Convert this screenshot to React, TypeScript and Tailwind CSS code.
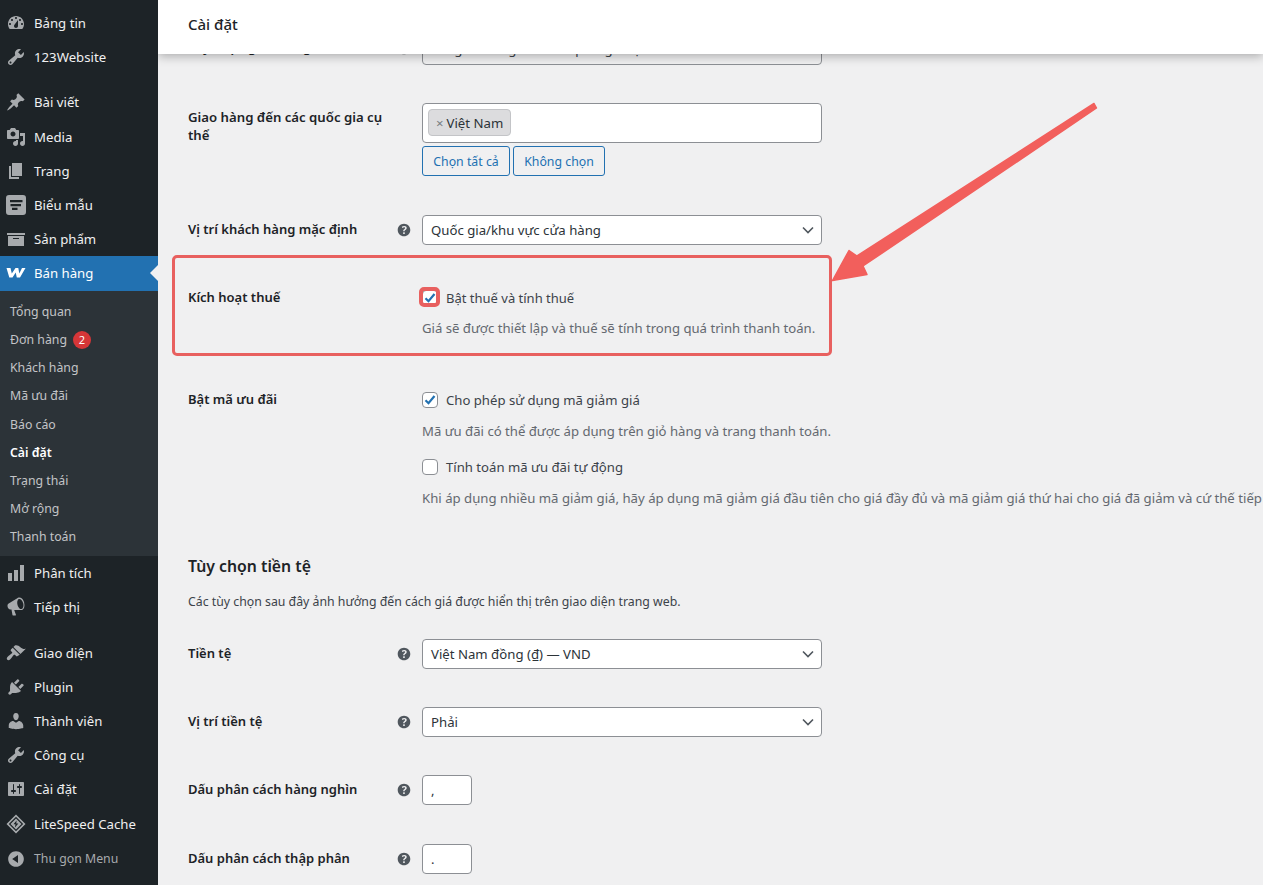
import type { ReactNode } from 'react'

const font = "font-['Noto_Sans','Liberation_Sans',sans-serif]"

// dashicons, 20x20 viewBox
const paths: Record<string, string> = {
  dashboard:
    'M3.76 16h12.48c1.1-1.37 1.76-3.11 1.76-5 0-4.42-3.58-8-8-8s-8 3.58-8 8c0 1.89.66 3.63 1.76 5zM10 4c.55 0 1 .45 1 1s-.45 1-1 1-1-.45-1-1 .45-1 1-1zM6 6c.55 0 1 .45 1 1s-.45 1-1 1-1-.45-1-1 .45-1 1-1zm8 0c.55 0 1 .45 1 1s-.45 1-1 1-1-.45-1-1 .45-1 1-1zm-5.37 5.55L12 7v6c0 1.1-.9 2-2 2s-2-.9-2-2c0-.57.24-1.08.63-1.45zM4 10c.55 0 1 .45 1 1s-.45 1-1 1-1-.45-1-1 .45-1 1-1zm12 0c.55 0 1 .45 1 1s-.45 1-1 1-1-.45-1-1 .45-1 1-1z',
  tools:
    'M16.68 9.77c-1.34 1.34-3.3 1.67-4.95.99l-5.41 6.52c-.99.99-2.59.99-3.58 0s-.99-2.59 0-3.57l6.52-5.42c-.68-1.65-.35-3.61.99-4.95 1.28-1.28 3.12-1.62 4.72-1.06l-2.89 2.89 2.82 2.82 2.86-2.87c.53 1.58.18 3.39-1.08 4.65zM3.81 16.21c.4.39 1.04.39 1.43 0 .4-.4.4-1.04 0-1.43-.39-.4-1.03-.4-1.43 0-.39.39-.39 1.03 0 1.43z',
  post: 'M10.44 3.02l1.82-1.82 6.36 6.35-1.83 1.82c-1.05-.68-2.48-.57-3.41.36l-.75.75c-.92.93-1.04 2.35-.35 3.41l-1.83 1.82-2.41-2.41-2.8 2.79c-.42.42-3.38 2.71-3.8 2.29s1.86-3.39 2.28-3.81l2.79-2.79L4.1 9.36l1.83-1.82c1.05.69 2.48.57 3.4-.36l.75-.75c.93-.92 1.05-2.35.36-3.41z',
  media:
    'M13 11V4c0-.55-.45-1-1-1h-1.67L9 1H5L3.67 3H2c-.55 0-1 .45-1 1v7c0 .55.45 1 1 1h10c.55 0 1-.45 1-1zM7 4.5c1.38 0 2.5 1.12 2.5 2.5S8.38 9.5 7 9.5 4.5 8.38 4.5 7 5.62 4.5 7 4.5zM14 6h5v10.5c0 1.38-1.12 2.5-2.5 2.5S14 17.88 14 16.5s1.12-2.5 2.5-2.5c.17 0 .34.02.5.05V9h-3V6zm-4 8.05V13h2v3.5c0 1.38-1.12 2.5-2.5 2.5S7 17.88 7 16.5 8.12 14 9.5 14c.17 0 .34.02.5.05z',
  page: 'M6 15V2h10v13H6zm-1 1h8v2H3V5h2v11z',
  form: 'M3 0h14a3 3 0 0 1 3 3v14a3 3 0 0 1-3 3H3a3 3 0 0 1-3-3V3a3 3 0 0 1 3-3zM4 5v2.300h12.500V5H4zM4.500 9v2.200h10.500V9H4.500zM6 12.800V15h5.500v-2.200H6z',
  archive: 'M19 4v2H1V4h18zM2 7h16v10H2V7zm11 3V9H7v1h6z',
  woo: 'M.5 5h4l1.300 5.500L9.500 5h2.800l1 5.500L16 5h3.500l-5.500 9.500h-3.200l-1.100-5-3.200 5H3.300z',
  chart: 'M18 18V2h-4v16h4zm-6 0V7H8v11h4zm-6 0v-8H2v8h4z',
  megaphone:
    'M18.150 5.940c.46 1.620.38 3.220-.02 4.480-.42 1.280-1.260 2.180-2.300 2.480-.16.06-.26.06-.4.06-.06.02-.12.02-.18.02-.06.02-.14.02-.22.02H8.200l1.800 4.900c.02.14-.06.26-.14.34-.08.1-.24.16-.34.16H6.950c-.1 0-.26-.06-.34-.16-.08-.08-.16-.2-.14-.34l-1-5.500H4.250c-.5.06-1.080-.18-1.540-.62s-.88-1.080-1.060-1.880c-.24-.8-.2-1.560-.02-2.200.18-.62.58-1.080 1.060-1.300l9.020-5.420c.1-.06.18-.1.24-.16.06-.04.14-.08.24-.12.16-.08.28-.12.5-.18 1.040-.3 2.240.1 3.220 1 .98.880 1.800 2.240 2.260 3.860zm-2.580 5.980c.4-.1.740-.34 1.040-.7.58-.7.860-1.760.860-3.040-.02-.64-.1-1.300-.28-1.980-.34-1.360-1.020-2.500-1.780-3.240s-1.680-1.100-2.460-.88c-.38.12-.72.38-.98.76-.58.74-.84 1.900-.76 3.160.06.7.18 1.340.36 1.960.34 1.320 1 2.480 1.740 3.200.72.740 1.520 1.100 2.260.76z',
  brush:
    'M14.480 11.060L7.410 3.990l1.500-1.500c.5-.56 2.300-.47 3.510.32 1.210.8 1.430 1.280 2.910 2.100 1.180.64 2.450 1.260 4.450.85zm-.71.71L6.700 4.700 4.930 6.470c-.39.39-.39 1.020 0 1.410l1.060 1.060c.39.39.39 1.030 0 1.420-.6.6-1.430 1.110-2.210 1.700-.59.44-1.440 1.060-2.050 1.670-1.030 1.030-1.220 2.250-.45 3.020.78.770 2 .58 3.030-.45.61-.61 1.230-1.460 1.670-2.050.59-.78 1.100-1.610 1.700-2.210.39-.39 1.030-.39 1.420 0l1.060 1.060c.39.39 1.020.39 1.410 0z',
  plugin:
    'M13.110 4.360L9.870 7.600 8 5.730l3.240-3.240c.35-.34 1.050-.2 1.560.32.52.51.66 1.210.31 1.550zm-8 1.770l.91-1.120 9.010 9.010-1.190.84c-.71.71-2.630 1.160-3.820 1.160H6.140L4.900 17.260c-.59.59-1.540.59-2.120 0-.59-.58-.59-1.530 0-2.120l1.240-1.240v-3.880c0-1.130.4-3.190 1.090-3.890zm7.260 3.970l3.240-3.240c.34-.35 1.040-.21 1.550.31.52.51.66 1.210.31 1.550l-3.240 3.250z',
  users:
    'M10 9.250c-2.270 0-2.730-3.440-2.730-3.440C7 4.020 7.820 2 9.970 2c2.160 0 2.980 2.020 2.710 3.810 0 0-.41 3.440-2.68 3.440zm0 2.570L12.720 10c2.390 0 4.520 2.330 4.520 4.530v2.490s-3.650 1.130-7.240 1.130c-3.650 0-7.240-1.130-7.240-1.130v-2.490c0-2.250 1.940-4.480 4.470-4.480z',
  settings:
    'M18 16V4c0-.55-.45-1-1-1H3c-.55 0-1 .45-1 1v12c0 .55.45 1 1 1h14c.55 0 1-.45 1-1zM8 11h1c.55 0 1 .45 1 1s-.45 1-1 1H8v1.500c0 .28-.22.5-.5.5s-.5-.22-.5-.5V13H6c-.55 0-1-.45-1-1s.45-1 1-1h1V5.500c0-.28.22-.5.5-.5s.5.22.5.5V11zm5-2h-1c-.55 0-1-.45-1-1s.45-1 1-1h1V5.500c0-.28.22-.5.5-.5s.5.22.5.5V7h1c.55 0 1 .45 1 1s-.45 1-1 1h-1v5.500c0 .28-.22.5-.5.5s-.5-.22-.5-.5V9z',
  collapse: 'M10 2.160c4.330 0 7.840 3.510 7.840 7.840s-3.510 7.840-7.840 7.840S2.160 14.330 2.160 10 5.710 2.160 10 2.160zm2 11.720V6.120L6.180 9.970z',
  litespeed:
    'M10 .5L19.500 10 10 19.500.5 10 10 .5zm0 2.300L2.800 10l7.200 7.200 7.200-7.200L10 2.800zm0 1.700l5.500 5.500-5.500 5.500L4.500 10 10 4.500zm.6 1.900L7.500 10.300h2l-.6 3.300 3.500-4h-2.100l.3-3.200z',
}

const help =
  'M17 10c0-3.870-3.140-7-7-7-3.870 0-7 3.130-7 7 0 3.860 3.130 7 7 7 3.860 0 7-3.140 7-7zm-6.300 1.480H9.140v-.43c0-.38.08-.7.24-.98s.46-.57.88-.89c.41-.29.68-.53.81-.71.14-.18.2-.39.2-.62 0-.25-.09-.44-.28-.58-.19-.13-.45-.19-.79-.19-.58 0-1.250.19-2 .57l-.64-1.280c.87-.49 1.800-.74 2.770-.74.81 0 1.450.2 1.920.58.48.39.71.91.71 1.550 0 .43-.09.8-.29 1.110-.19.32-.57.67-1.110 1.060-.38.28-.61.49-.71.63-.1.15-.15.34-.15.57v.35zm-1.470 2.740c-.18-.18-.27-.42-.27-.73 0-.33.08-.58.26-.75s.43-.25.77-.25c.32 0 .57.09.75.26s.27.42.27.74c0 .3-.09.55-.27.72-.18.18-.43.27-.75.27-.33 0-.58-.09-.76-.26z'

function Icon({ name, active }: { name: string; active?: boolean }) {
  return (
    <svg viewBox="0 0 20 20" className={`h-5 w-5 ${active ? 'fill-white' : 'fill-[#a7aaad]'}`}>
      <path d={paths[name]} fillRule="evenodd" />
    </svg>
  )
}

function MenuItem({ icon, label, dim }: { icon: string; label: string; dim?: boolean }) {
  return (
    <div className="flex h-[34px] items-center">
      <div className="mr-[2px] flex w-[32px] justify-center">
        <Icon name={icon} />
      </div>
      <span className={dim ? 'text-[#a7aaad]' : 'text-[#f0f0f1]'}>{label}</span>
    </div>
  )
}

const shopLinks = ['Tổng quan', 'Đơn hàng', 'Khách hàng', 'Mã ưu đãi', 'Báo cáo', 'Cài đặt', 'Trạng thái', 'Mở rộng', 'Thanh toán']

function Sidebar() {
  return (
    <aside className="h-full w-[158px] shrink-0 overflow-hidden bg-[#1d2327] pt-[6px] text-[13.2px] leading-[18px]">
      <MenuItem icon="dashboard" label="Bảng tin" />
      <MenuItem icon="tools" label="123Website" />
      <div className="h-[11px]" />
      <MenuItem icon="post" label="Bài viết" />
      <div className="h-px" />
      <MenuItem icon="media" label="Media" />
      <MenuItem icon="page" label="Trang" />
      <MenuItem icon="form" label="Biểu mẫu" />
      <MenuItem icon="archive" label="Sản phẩm" />
      <div className="relative flex h-[35px] items-center bg-[#2271b1] pb-px">
        <div className="mr-[2px] flex w-[32px] justify-center">
          <Icon name="woo" active />
        </div>
        <span className="text-white">Bán hàng</span>
        <div className="absolute right-0 top-[9px] h-0 w-0 border-y-[8px] border-r-[8px] border-y-transparent border-r-[#f0f0f1]" />
      </div>
      <div className="bg-[#2c3338] pb-[5px] pt-[7px] text-[12.3px]">
        {shopLinks.map((l) => (
          <div key={l} className={`flex h-[28.15px] items-center gap-[6px] pl-[10px] ${l === 'Cài đặt' ? 'font-semibold text-white' : 'text-[#c3c4c7]'}`}>
            {l}
            {l === 'Đơn hàng' && (
              <span className="flex h-[18px] w-[18px] items-center justify-center rounded-full bg-[#d63638] text-[11px] text-white">2</span>
            )}
          </div>
        ))}
      </div>
      <MenuItem icon="chart" label="Phân tích" />
      <MenuItem icon="megaphone" label="Tiếp thị" />
      <div className="h-[12px]" />
      <MenuItem icon="brush" label="Giao diện" />
      <MenuItem icon="plugin" label="Plugin" />
      <MenuItem icon="users" label="Thành viên" />
      <MenuItem icon="tools" label="Công cụ" />
      <MenuItem icon="settings" label="Cài đặt" />
      <div className="h-px" />
      <MenuItem icon="litespeed" label="LiteSpeed Cache" />
      <div className="mt-px text-[12.3px]">
        <MenuItem icon="collapse" label="Thu gọn Menu" dim />
      </div>
    </aside>
  )
}

function HelpTip() {
  return (
    <svg viewBox="0 0 20 20" className="h-[18px] w-[18px] fill-[#50575e]">
      <path d={help} fillRule="evenodd" />
    </svg>
  )
}

function Row({ label, tip, className, children }: { label: ReactNode; tip?: boolean; className?: string; children: ReactNode }) {
  return (
    <div className={`flex ${className ?? ''}`}>
      <div className="flex w-[234px] shrink-0 justify-between pr-[9px] font-semibold text-[#1d2327]">
        <div className="w-[200px] leading-[18px]">{label}</div>
        {tip && <div className="mt-[1px]"><HelpTip /></div>}
      </div>
      <div className="min-w-0 flex-1">{children}</div>
    </div>
  )
}

function SelectBox({ value }: { value: string }) {
  return (
    <div className="flex h-[30px] w-[400px] items-center justify-between rounded-[4px] border border-[#8c8f94] bg-white pl-2 pr-[7px] text-[13.2px] text-[#2c3338]">
      <span>{value}</span>
      <svg viewBox="0 0 12 8" className="h-2 w-3 fill-none stroke-[#50575e] stroke-[1.6]">
        <path d="M1 1.500l5 5 5-5" />
      </svg>
    </div>
  )
}

function SmallInput({ value }: { value: string }) {
  return (
    <div className="flex h-[30px] w-[50px] items-center rounded-[4px] border border-[#8c8f94] bg-white pl-2 text-[#2c3338]">{value}</div>
  )
}

function CheckBox({ checked }: { checked?: boolean }) {
  return (
    <div className="relative h-4 w-4 rounded-[4px] border border-[#8c8f94] bg-white">
      {checked && (
        <svg viewBox="0 0 16 16" className="absolute left-[-1px] top-[-1px] h-4 w-4 fill-none stroke-[#2271b1] stroke-[2.200]">
          <path d="M3.500 8.200l3 3 6-7.200" />
        </svg>
      )}
    </div>
  )
}

function Settings() {
  return (
    <div className="-mt-[16px] pl-[30px] text-[13px] leading-[18px] text-[#3c434a]">
      <Row label="Tùy chọn giao hàng" tip className="h-[65px]">
        <div className="mt-[2px] flex h-[25px] w-[400px] items-center rounded-b-[4px] border border-[#8c8f94] pb-[8px] pl-2 text-[13.2px]">Chỉ giao hàng đến các quốc gia cụ thể</div>
      </Row>
      <Row label={<span className="text-[13.2px]">Giao hàng đến các quốc gia cụ thể</span>} className="h-[112px] pt-[5px]">
        <div className="-mt-[5px] flex h-[40px] w-[400px] items-start rounded-[4px] border border-[#8c8f94] bg-white p-[5px]">
          <span className="flex h-[27px] items-center rounded-[4px] border border-[#c3c4c7] bg-[#dcdcde] px-[7px] text-[13.2px] text-[#2c3338]">
            <span className="mr-[3px] text-[#787c82]">×</span>Việt Nam
          </span>
        </div>
        <div className="mt-[3px] flex gap-[3px] text-[12.3px]">
          <span className="flex h-[30px] w-[88px] items-center justify-center rounded-[3px] border border-[#2271b1] pt-px text-[#2271b1]">Chọn tất cả</span>
          <span className="flex h-[30px] w-[92px] items-center justify-center rounded-[3px] border border-[#2271b1] pt-px text-[#2271b1]">Không chọn</span>
        </div>
      </Row>
      <Row label="Vị trí khách hàng mặc định" tip className="h-[72px] pt-[5px]">
        <div className="-mt-[5px]"><SelectBox value="Quốc gia/khu vực cửa hàng" /></div>
      </Row>
      <Row label="Kích hoạt thuế" className="h-[103px] pt-[1px]">
        <div className="flex items-center gap-2 pt-[1px]">
          <CheckBox checked />
          <span>Bật thuế và tính thuế</span>
        </div>
        <p className="mt-[12px] text-[13.15px] text-[#646970]">Giá sẽ được thiết lập và thuế sẽ tính trong quá trình thanh toán.</p>
      </Row>
      <Row label="Bật mã ưu đãi" className="h-[165px]">
        <div className="flex items-center gap-2 pt-[1px]">
          <CheckBox checked />
          <span className="text-[13.15px]">Cho phép sử dụng mã giảm giá</span>
        </div>
        <p className="mt-[13px] text-[13.15px] text-[#646970]">Mã ưu đãi có thể được áp dụng trên giỏ hàng và trang thanh toán.</p>
        <div className="mt-[18px] flex items-center gap-2">
          <CheckBox />
          <span className="text-[13.15px]">Tính toán mã ưu đãi tự động</span>
        </div>
        <p className="mt-[13px] whitespace-nowrap text-[13.2px] text-[#646970]">Khi áp dụng nhiều mã giảm giá, hãy áp dụng mã giảm giá đầu tiên cho giá đầy đủ và mã giảm giá thứ hai cho giá đã giảm và cứ thế tiếp</p>
      </Row>
      <h2 className="text-[15.8px] font-semibold leading-[22px] text-[#1d2327]">Tùy chọn tiền tệ</h2>
      <p className="mt-[16px] text-[12.3px] text-[#3c434a]">Các tùy chọn sau đây ảnh hưởng đến cách giá được hiển thị trên giao diện trang web.</p>
      <Row label="Tiền tệ" tip className="mt-[28px] h-[68px] pt-[5px]">
        <div className="-mt-[5px]"><SelectBox value="Việt Nam đồng (₫) — VND" /></div>
      </Row>
      <Row label="Vị trí tiền tệ" tip className="h-[68px] pt-[5px]">
        <div className="-mt-[5px]"><SelectBox value="Phải" /></div>
      </Row>
      <Row label="Dấu phân cách hàng nghìn" tip className="h-[69px] pt-[5px]">
        <div className="-mt-[5px]"><SmallInput value="," /></div>
      </Row>
      <Row label="Dấu phân cách thập phân" tip className="h-[68px] pt-[5px]">
        <div className="-mt-[5px]"><SmallInput value="." /></div>
      </Row>
    </div>
  )
}

export default function App() {
  return (
    <div className={`flex h-[885px] w-full overflow-hidden bg-[#f0f0f1] ${font}`}>
      <Sidebar />
      <main className="relative min-w-0 flex-1 overflow-hidden">
        <header className="relative z-10 flex h-[54px] items-center bg-white pb-[6px] pl-[30px] text-[15px] font-medium text-[#1d2327] shadow-[0_2px_10px_rgba(0,0,0,0.3)]">
          Cài đặt
        </header>
        <Settings />

        {/* annotations drawn on top of the screenshot */}
        <div className="absolute left-[14px] top-[255px] h-[101px] w-[660px] rounded-[5px] border-[3px] border-[#e8605f]" />
        <div className="absolute left-[261px] top-[287px] h-[20px] w-[21px] rounded-[5px] border-[4px] border-[#e8605f]" />
        <svg viewBox="0 0 270 185" className="absolute left-[672px] top-[100px] h-[185px] w-[270px] fill-[#f25f5c] stroke-[#f25f5c] stroke-[1.500] [stroke-linejoin:round]">
          <path d="M2.500 180.500L19 150.500 27 156 264 3.500 266.500 8 33 166 37 174.500z" />
        </svg>
      </main>
    </div>
  )
}
